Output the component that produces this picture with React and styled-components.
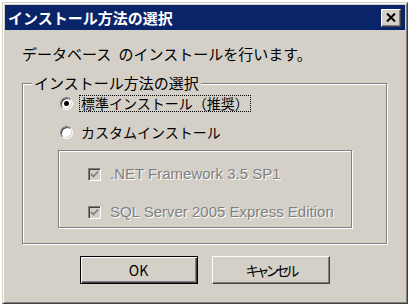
import React from 'react';
import styled, { createGlobalStyle } from 'styled-components';

const GlobalStyle = createGlobalStyle`
  html, body { margin: 0; padding: 0; background: #fff; }
  body { font-family: "Noto Sans CJK JP", "Noto Sans", sans-serif; color: #000; }
`;

const Window = styled.div`
  box-sizing: border-box;
  margin: 2px 0 0 2px;
  width: 406px;
  height: 302px;
  background: #d4d0c8;
  border: 1px solid;
  border-color: #d4d0c8 #404040 #404040 #d4d0c8;
  box-shadow: inset 1px 1px 0 #fff, inset -1px -1px 0 #808080;
  padding: 2px;
  display: flex;
  flex-direction: column;
`;

const TitleBar = styled.div`
  height: 25px;
  background: #0a246a;
  display: flex;
  align-items: center;
  justify-content: space-between;
  padding: 0 4px 0 3px;
`;

const Title = styled.span`
  color: #fff;
  font-weight: bold;
  font-size: 15px;
  line-height: 1;
`;

const CloseButton = styled.div`
  box-sizing: border-box;
  width: 20px;
  height: 18px;
  background: #d4d0c8;
  border: 1px solid;
  border-color: #fff #404040 #404040 #fff;
  box-shadow: inset -1px -1px 0 #808080;
  display: flex;
  align-items: center;
  justify-content: center;
`;

const Body = styled.div`
  display: flex;
  flex-direction: column;
  padding: 0 18px 0 17px;
`;

const Intro = styled.div`
  margin-top: 15px;
  font-size: 15px;
  line-height: 18px;
  word-spacing: 4px;
`;

const GroupBox = styled.fieldset`
  margin: 11px 0 0 0;
  padding: 0 0 15px 0;
  border: 1px solid #808080;
  box-shadow: inset 1px 1px 0 #fff, 1px 1px 0 #fff;
  min-width: 0;
`;

const Legend = styled.legend`
  margin-left: 9px;
  padding: 0 2px;
  font-size: 15px;
  line-height: 18px;
  background: #d4d0c8;
`;

const RadioRow = styled.div`
  display: flex;
  align-items: center;
  height: 20px;
  padding-left: 37px;
  margin-top: ${p => p.$first ? '1px' : '9px'};
`;

const RadioCircle = styled.span`
  box-sizing: border-box;
  width: 13px;
  height: 13px;
  border-radius: 50%;
  background: #fff;
  border: 1px solid;
  border-color: #808080 #fff #fff #808080;
  box-shadow: inset 1px 1px 0 #404040, inset -1px -1px 0 #d4d0c8;
  display: flex;
  align-items: center;
  justify-content: center;
  &::after {
    content: '';
    width: 5px;
    height: 5px;
    border-radius: 50%;
    background: ${p => p.$checked ? '#000' : 'transparent'};
  }
`;

const RadioLabel = styled.span`
  margin-left: 6px;
  padding: 0 1px;
  font-size: 14px;
  line-height: 15px;
  border: 1px dotted ${p => p.$focused ? '#000' : 'transparent'};
`;

const OptionBox = styled.div`
  margin: 8px 34px 0 35px;
  border: 1px solid #808080;
  box-shadow: inset 1px 1px 0 #fff, 1px 1px 0 #fff;
  padding: 13px 0 5px 29px;
  display: flex;
  flex-direction: column;
  gap: 18px;
`;

const CheckRow = styled.div`
  display: flex;
  align-items: center;
  height: 20px;
`;

const CheckSquare = styled.span`
  box-sizing: border-box;
  width: 13px;
  height: 13px;
  background: #d4d0c8;
  border: 1px solid;
  border-color: #808080 #fff #fff #808080;
  box-shadow: inset 1px 1px 0 #404040, inset -1px -1px 0 #d4d0c8;
  display: flex;
  align-items: center;
  justify-content: center;
`;

const DisabledText = styled.span`
  margin-left: 9px;
  font-family: "Liberation Sans", Arial, sans-serif;
  font-size: 15px;
  line-height: 18px;
  color: #808080;
  text-shadow: 1px 1px 0 #fff;
`;

const ButtonRow = styled.div`
  display: flex;
  justify-content: center;
  gap: 14px;
  margin-top: 12px;
`;

const Button = styled.div`
  box-sizing: border-box;
  width: 118px;
  height: 28px;
  background: #d4d0c8;
  display: flex;
  align-items: center;
  justify-content: center;
  font-size: 14px;
  border: 1px solid;
  border-color: ${p => p.$default ? '#000' : '#fff #404040 #404040 #fff'};
  box-shadow: ${p => p.$default
    ? 'inset 1px 1px 0 #fff, inset -1px -1px 0 #404040, inset -2px -2px 0 #808080'
    : 'inset -1px -1px 0 #808080'};
  letter-spacing: ${p => p.$tight ? '-4px' : '0'};
`;

const Check = () => (
  <svg width="9" height="9" viewBox="0 0 9 9">
    <path d="M1 4 L3.5 6.5 L8 1.5" fill="none" stroke="#808080" strokeWidth="1.8" />
  </svg>
);

const Cross = () => (
  <svg width="10" height="9" viewBox="0 0 10 9">
    <path d="M1 0.5 L9 8.5 M9 0.5 L1 8.5" stroke="#000" strokeWidth="2" />
  </svg>
);

export default function App() {
  return (
    <>
      <GlobalStyle />
      <Window>
        <TitleBar>
          <Title>インストール方法の選択</Title>
          <CloseButton><Cross /></CloseButton>
        </TitleBar>
        <Body>
          <Intro>データベース のインストールを行います。</Intro>
          <GroupBox>
            <Legend>インストール方法の選択</Legend>
            <RadioRow $first>
              <RadioCircle $checked />
              <RadioLabel $focused>標準インストール（推奨）</RadioLabel>
            </RadioRow>
            <RadioRow>
              <RadioCircle />
              <RadioLabel>カスタムインストール</RadioLabel>
            </RadioRow>
            <OptionBox>
              <CheckRow>
                <CheckSquare><Check /></CheckSquare>
                <DisabledText>.NET Framework 3.5 SP1</DisabledText>
              </CheckRow>
              <CheckRow>
                <CheckSquare><Check /></CheckSquare>
                <DisabledText>SQL Server 2005 Express Edition</DisabledText>
              </CheckRow>
            </OptionBox>
          </GroupBox>
          <ButtonRow>
            <Button $default>OK</Button>
            <Button $tight>キャンセル</Button>
          </ButtonRow>
        </Body>
      </Window>
    </>
  );
}
